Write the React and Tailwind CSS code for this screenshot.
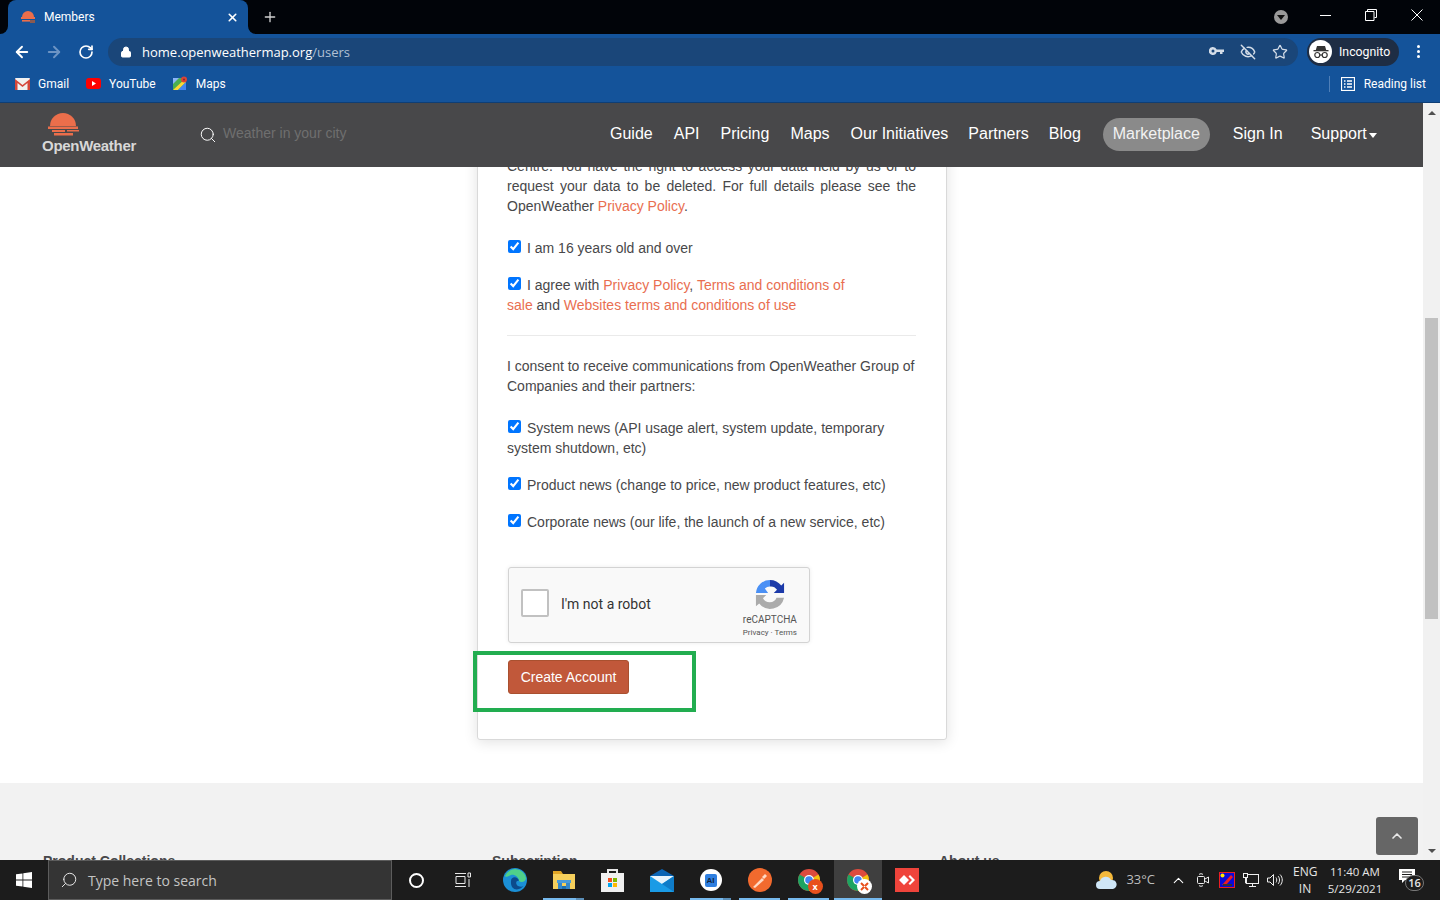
import { ArrowLeft, ArrowRight, RotateCw, Lock, EyeOff, Star, X, Plus, Search, ChevronUp } from 'lucide-react'

const chromeFont = 'font-["Open_Sans",sans-serif]'
const uiFont = 'font-["Roboto",sans-serif]'

function TabFavicon() {
  return (
    <svg width="16" height="16" viewBox="0 0 16 16">
      <path d="M2 8a6 6 0 0 1 12 0z" fill="#eb6e4b" />
      <rect x="1" y="8" width="14" height="2" fill="#eb6e4b" />
      <rect x="2" y="11" width="8" height="1.600" fill="#eb6e4b" />
      <rect x="10" y="11" width="5" height="3" fill="#8a5a50" />
    </svg>
  )
}

function GmailIcon() {
  return (
    <svg width="15" height="12" viewBox="0 0 15 12">
      <rect width="15" height="12" rx="1" fill="#f1f1f1" />
      <path d="M0 1 7.500 7 15 1v11h-2.500V5L7.500 9 2.500 5v7H0z" fill="#d5463a" />
    </svg>
  )
}

function YoutubeIcon() {
  return (
    <svg width="15" height="11" viewBox="0 0 15 11">
      <rect width="15" height="11" rx="3" fill="#f00" />
      <path d="M6 3v5l4-2.500z" fill="#fff" />
    </svg>
  )
}

function MapsIcon() {
  return (
    <svg width="15" height="15" viewBox="0 0 15 15">
      <rect y="2" width="13" height="12" fill="#4caf50" />
      <path d="M0 14 13 2v4L5 14z" fill="#fdd835" />
      <path d="M5 14 13 6v8z" fill="#4285f4" />
      <path d="M0 2h6L0 8z" fill="#8ab4f8" />
      <circle cx="11" cy="3.500" r="3" fill="#db4437" />
      <circle cx="11" cy="3.500" r="1" fill="#8e2a20" />
    </svg>
  )
}

function KeyIcon() {
  return (
    <svg width="15" height="9" viewBox="0 0 15 9" fill="#d4dde8">
      <path d="M4 0a4 4 0 0 1 3.700 2.500H15v2.500h-1.500v2H11V5H7.700A4 4 0 1 1 4 0zm0 2.500a1.500 1.500 0 1 0 0 3 1.500 1.500 0 0 0 0-3z" fillRule="evenodd" />
    </svg>
  )
}

function IncognitoIcon() {
  return (
    <svg width="16" height="14" viewBox="0 0 16 14" fill="none">
      <path d="M4 1h8l1.200 4H2.800z" fill="#333" />
      <rect x="0.500" y="5" width="15" height="1.300" fill="#333" />
      <circle cx="4.300" cy="10" r="2.500" stroke="#333" strokeWidth="1.200" />
      <circle cx="11.700" cy="10" r="2.500" stroke="#333" strokeWidth="1.200" />
      <path d="M6.800 10h2.400" stroke="#333" strokeWidth="1.200" />
    </svg>
  )
}

function ReadingListIcon() {
  return (
    <svg width="14" height="14" viewBox="0 0 14 14" fill="none" stroke="#fff">
      <rect x="0.500" y="0.500" width="13" height="13" strokeWidth="1.200" />
      <path d="M3 4h1.500M3 7h1.500M3 10h1.500M6 4h5M6 7h5M6 10h5" strokeWidth="1.400" />
    </svg>
  )
}

function Logo() {
  return (
    <div className="flex flex-col items-center w-[94px] -mt-[2px]">
      <svg width="38" height="25" viewBox="0 0 38 25" fill="#eb6e4b" className="-translate-x-[26px]">
        <path d="M6 14a13 13 0 0 1 26 0z" />
        <rect x="4" y="14.500" width="30" height="2.500" />
        <rect x="8" y="18" width="13" height="2" />
        <rect x="23" y="18" width="12" height="1.500" />
        <rect x="10" y="21" width="19" height="2.500" />
      </svg>
      <span className='mt-[1px] text-[15px] leading-[16px] font-bold text-[#d8d8d8] tracking-[-0.3px] font-["Liberation_Sans",sans-serif]'>OpenWeather</span>
    </div>
  )
}

function Recaptcha() {
  return (
    <svg width="30" height="30" viewBox="0 0 32 32">
      <path d="M16 1A15 15 0 0 1 28 7L31 4V15H20L23.500 11.500A8 8 0 0 0 16 8Z" fill="#1c3aa9" />
      <path d="M1 15A15 15 0 0 1 16 1V8A8 8 0 0 0 10.500 10L14 15Z" fill="#4a90f5" />
      <path d="M1 17H12L8.500 20.500A8 8 0 0 0 23 20H31A15 15 0 0 1 4.500 26L1 29Z" fill="#ababab" />
    </svg>
  )
}

function Check({ children, className = '' }) {
  return (
    <p className={className}>
      <input type="checkbox" defaultChecked className="ml-[1px] mr-[6px] w-[13px] h-[13px] align-baseline" />
      {children}
    </p>
  )
}

function A({ children }) {
  return <a className="text-[#e96e50]">{children}</a>
}

function TopBrowser() {
  return (
    <div className={chromeFont}>
      <div className="h-[34px] bg-[#010409] flex items-end">
        <div className="relative ml-[8px] w-[240px] h-[34px] bg-[#14539a] rounded-t-lg flex items-center pl-[12px] pr-[9px]">
          <div className="absolute -left-[8px] bottom-0 w-[8px] h-[8px] bg-[#14539a]">
            <div className="w-[8px] h-[8px] bg-[#010409] rounded-br-[8px]" />
          </div>
          <div className="absolute -right-[8px] bottom-0 w-[8px] h-[8px] bg-[#14539a]">
            <div className="w-[8px] h-[8px] bg-[#010409] rounded-bl-[8px]" />
          </div>
          <TabFavicon />
          <span className={`ml-[8px] flex-1 text-[12px] text-white ${uiFont}`}>Members</span>
          <X size={13} strokeWidth={3} className="text-white" />
        </div>
        <div className="ml-[14px] h-[34px] flex items-center">
          <Plus size={16} strokeWidth={2} className="text-[#d0d0d0]" />
        </div>
        <div className="ml-auto h-[34px] flex items-center">
          <div className="w-[14px] h-[14px] rounded-full bg-[#9a9a9a] flex items-center justify-center">
            <div className="border-x-[4px] border-x-transparent border-t-[5px] border-t-[#111]" />
          </div>
          <svg width="11" height="12" viewBox="0 0 11 12" stroke="#fff" className="ml-[32px] -mt-[4px]">
            <path d="M0 6.500h11" />
          </svg>
          <svg width="12" height="12" viewBox="0 0 12 12" fill="none" stroke="#fff" className="ml-[34px] -mt-[4px]">
            <path d="M2.500 2.500v-2h9v8h-2M.5 2.500h8.500v9H.5z" />
          </svg>
          <svg width="12" height="12" viewBox="0 0 12 12" fill="none" stroke="#fff" className="ml-[34px] mr-[17px] -mt-[4px]">
            <path d="M.5.5l11 11M11.500.5l-11 11" />
          </svg>
        </div>
      </div>

      <div className="h-[35px] bg-[#14539a] flex items-center">
        <ArrowLeft size={18} strokeWidth={2.500} className="ml-[13px] text-white" />
        <ArrowRight size={18} strokeWidth={2.500} className="ml-[14px] text-[#6d94c4]" />
        <RotateCw size={16} strokeWidth={2.500} className="ml-[15px] text-white" />
        <div className="ml-[14px] w-[1190px] h-[28px] bg-[#1a4679] rounded-full flex items-center pl-[12px] pr-[10px]">
          <Lock size={12} fill="#fff" className="text-white" />
          <span className="ml-[10px] mt-[3px] text-[13px] text-white">home.openweathermap.org<span className="text-[#b0c0d4]">/users</span></span>
          <div className="ml-auto flex items-center gap-[16px]">
            <KeyIcon />
            <EyeOff size={16} strokeWidth={2.200} className="text-[#d4dde8]" />
            <Star size={16} strokeWidth={1.800} className="text-[#d4dde8]" />
          </div>
        </div>
        <div className="ml-[9px] w-[92px] h-[28px] bg-[#1e2d44] rounded-full flex items-center pl-[2px]">
          <div className="w-[23px] h-[23px] rounded-full bg-white flex items-center justify-center">
            <IncognitoIcon />
          </div>
          <span className={`ml-[7px] mt-[1px] text-[12.300px] text-white ${uiFont}`}>Incognito</span>
        </div>
        <div className="ml-[18px] flex flex-col gap-[2px]">
          <div className="w-[3px] h-[3px] rounded-full bg-white" />
          <div className="w-[3px] h-[3px] rounded-full bg-white" />
          <div className="w-[3px] h-[3px] rounded-full bg-white" />
        </div>
      </div>

      <div className={`h-[34px] bg-[#14539a] border-b border-[#0e3e75] flex items-center text-[12px] text-white pb-[4px] ${uiFont}`}>
        <div className="ml-[15px] flex items-center gap-[8px]"><GmailIcon /><span>Gmail</span></div>
        <div className="ml-[17px] flex items-center gap-[8px]"><YoutubeIcon /><span>YouTube</span></div>
        <div className="ml-[17px] flex items-center gap-[8px]"><MapsIcon /><span>Maps</span></div>
        <div className="ml-auto mr-[14px] flex items-center">
          <div className="w-px h-[16px] bg-[#4f7fb8] mr-[11px]" />
          <ReadingListIcon />
          <span className="ml-[9px]">Reading list</span>
        </div>
      </div>
    </div>
  )
}

function Navbar() {
  const links = [
    ['Guide', 'ml-[263px]'],
    ['API', 'ml-[21px]'],
    ['Pricing', 'ml-[21px]'],
    ['Maps', 'ml-[21px]'],
    ['Our Initiatives', 'ml-[21px]'],
    ['Partners', 'ml-[20px]'],
    ['Blog', 'ml-[20px]'],
  ]
  return (
    <nav className="h-[64px] bg-[#48484a] flex items-center text-white text-[16px] shrink-0 pb-[2px]">
      <div className="ml-[42px]"><Logo /></div>
      <Search size={18} strokeWidth={1.300} className="ml-[63px] mt-[2px] text-white" />
      <span className="ml-[6px] -mt-[1px] w-[124px] text-[14px] text-[#6f6f6f] whitespace-nowrap">Weather in your city</span>
      {links.map(([label, cls]) => (
        <a key={label} className={cls}>{label}</a>
      ))}
      <a className="ml-[22px] h-[33px] w-[107px] rounded-full bg-[#8a8a8a] flex items-center justify-center text-[#f2f2f2]">Marketplace</a>
      <a className="ml-[23px]">Sign In</a>
      <a className="ml-[28px] flex items-center">
        Support
        <span className="ml-[2px] mt-[2px] border-x-[4px] border-x-transparent border-t-[5px] border-t-white" />
      </a>
    </nav>
  )
}

function Card() {
  return (
    <div className="relative ml-[477px] -mt-[40px] w-[470px] h-[613px] bg-white border border-[#d9d9d9] rounded-[3px] shadow-[0_2px_14px_rgba(0,0,0,0.12)] pt-[28px] pl-[29px] pr-[30px] text-[14px] leading-[20px] text-[#48484a]">
      <p className="text-justify">
        Centre. You have the right to access your data held by us or to request your data to be deleted. For full details please see the OpenWeather <A>Privacy Policy</A>.
      </p>
      <Check className="mt-[22px]">I am 16 years old and over</Check>
      <Check className="mt-[17px]">
        I agree with <A>Privacy Policy</A>, <A>Terms and conditions of<br />sale</A> and <A>Websites terms and conditions of use</A>
      </Check>
      <hr className="mt-[20px] border-[#eaeaea]" />
      <p className="mt-[20px]">I consent to receive communications from OpenWeather Group of Companies and their partners:</p>
      <Check className="mt-[22px]">System news (API usage alert, system update, temporary system shutdown, etc)</Check>
      <Check className="mt-[17px]">Product news (change to price, new product features, etc)</Check>
      <Check className="mt-[17px]">Corporate news (our life, the launch of a new service, etc)</Check>

      <div className="mt-[35px] ml-[1px] w-[302px] h-[76px] bg-[#f9f9f9] border border-[#d3d3d3] rounded-[3px] shadow-[0_0_4px_rgba(0,0,0,0.08)] flex items-center pl-[12px] pr-[12px]">
        <div className="flex-1 flex items-center pb-[4px]">
          <div className="w-[28px] h-[28px] bg-white border-2 border-[#c1c1c1] rounded-[2px]" />
          <span className={`ml-[12px] mt-[1px] text-[14px] text-[#333] ${uiFont}`}>I'm not a robot</span>
        </div>
        <div className={`self-start mt-[11px] flex flex-col items-center text-[#555] ${uiFont}`}>
          <Recaptcha />
          <span className="mt-[5px] text-[10px] leading-[12px]">reCAPTCHA</span>
          <span className="mt-[2px] text-[8px] leading-[10px]">Privacy · Terms</span>
        </div>
      </div>

      <button className="block mt-[17px] ml-[1px] w-[121px] h-[34px] bg-[#c1583a] border border-[#a9502f] rounded-[3px] text-white text-[14px]">
        Create Account
      </button>

      <div className="absolute left-[-5px] top-[523px] w-[223px] h-[61px] border-4 border-[#22ad50]" />
    </div>
  )
}

function PageFooter() {
  return (
    <footer className='flex-1 bg-[#f2f2f2] relative pl-[43px] pt-[68px] text-[14px] font-bold text-[#48484a] flex'>
      <span className="w-[449px]">Product Collections</span>
      <span className="w-[447px]">Subscription</span>
      <span>About us</span>
      <div className="absolute left-[1376px] top-[34px] w-[42px] h-[38px] bg-[#666] rounded-[3px] flex items-center justify-center">
        <ChevronUp size={16} strokeWidth={2.500} className="text-[#e8e8e8]" />
      </div>
    </footer>
  )
}

function Scrollbar() {
  return (
    <div className="w-[17px] bg-[#f1f1f1] flex flex-col items-center shrink-0">
      <div className="mt-[8px] border-x-[4px] border-x-transparent border-b-[4px] border-b-[#505050]" />
      <div className="mt-[203px] w-[13px] h-[301px] bg-[#c1c1c1]" />
      <div className="mt-auto mb-[7px] border-x-[4px] border-x-transparent border-t-[4px] border-t-[#505050]" />
    </div>
  )
}

function Edge() {
  return (
    <svg width="24" height="24" viewBox="0 0 24 24">
      <circle cx="12" cy="12" r="12" fill="#1b8fd6" />
      <path d="M2 8A11 11 0 0 1 23 10c0 4-5 5-7 3 0-4-5-7-8-6S3 10 2 8z" fill="#4fd08a" />
      <path d="M8 13c0-5 7-5 8 0-3-1-4 3-1 5 3 1 5 1 6-1-3 6-14 7-13-4z" fill="#0c4a8c" />
    </svg>
  )
}

function Explorer() {
  return (
    <svg width="22" height="20" viewBox="0 0 22 20">
      <path d="M0 1h8l2 3H0z" fill="#e0a526" />
      <rect y="4" width="22" height="15" fill="#f5cf5c" />
      <rect x="4" y="10" width="14" height="3" fill="#4a9bd8" />
      <rect x="5" y="13" width="4" height="6" fill="#3587c9" />
      <rect x="13" y="13" width="4" height="6" fill="#3587c9" />
      <rect x="9" y="16" width="4" height="3" fill="#1d6fae" />
    </svg>
  )
}

function Store() {
  return (
    <svg width="23" height="24" viewBox="0 0 23 24">
      <path d="M7 6V2h9v4" fill="none" stroke="#e8e8e8" strokeWidth="2" />
      <rect y="5" width="23" height="19" fill="#f0f0f0" />
      <rect x="7" y="10" width="4" height="4" fill="#f25022" />
      <rect x="12" y="10" width="4" height="4" fill="#7fba00" />
      <rect x="7" y="15" width="4" height="4" fill="#00a4ef" />
      <rect x="12" y="15" width="4" height="4" fill="#ffb900" />
    </svg>
  )
}

function Mail() {
  return (
    <svg width="24" height="23" viewBox="0 0 24 23">
      <path d="M12 0 24 7v2H0V7z" fill="#0a64b4" />
      <rect y="7" width="24" height="16" fill="#1a9be6" />
      <path d="M0 7h24l-12 8z" fill="#e8f4fc" />
      <path d="M12 15 24 23V7z" fill="#0f7cc8" />
    </svg>
  )
}

function AiApp() {
  return (
    <div className='w-[22px] h-[22px] rounded-full bg-white flex items-center justify-center'>
      <div className='w-[12px] h-[13px] bg-[#2f7fe0] rounded-[2px] text-[8px] leading-[13px] font-bold text-[#10233f] text-center font-["Liberation_Sans",sans-serif]'>AI</div>
    </div>
  )
}

function Postman() {
  return (
    <svg width="24" height="24" viewBox="0 0 24 24">
      <circle cx="12" cy="12" r="12" fill="#f26a2e" />
      <path d="M5 19 14 10l2 2-9 8zM14 9l3-3 2 2-3 3z" fill="#ffd9c4" />
    </svg>
  )
}

function ChromeLogo() {
  return (
    <svg width="22" height="22" viewBox="0 0 22 22">
      <circle cx="11" cy="11" r="11" fill="#dd4b3e" />
      <path d="M11 11 20.500 5.500A11 11 0 0 1 11 22z" fill="#f4c20d" />
      <path d="M11 11 11 22A11 11 0 0 1 1.500 5.500z" fill="#1da462" />
      <circle cx="11" cy="11" r="5" fill="#fff" />
      <circle cx="11" cy="11" r="3.800" fill="#4285f4" />
    </svg>
  )
}

function TaskbarApp({ children, active, running, stacked }) {
  return (
    <div className={`relative h-[40px] flex items-center justify-center ${active ? 'w-[48px] ml-[1px] bg-[#3f3f3f]' : 'w-[49px]'}`}>
      {children}
      {running && <div className={`absolute bottom-0 h-[2px] bg-[#76b9ed] ${active ? 'left-0 right-0' : 'left-[4px] right-[4px]'}`} />}
      {stacked && <div className="absolute bottom-0 right-[4px] w-[8px] h-[2px] bg-[#5b8fb8]" />}
    </div>
  )
}

function Tray() {
  return (
    <div className='ml-auto flex items-center h-[40px] text-[#e6e6e6]'>
      <svg width="22" height="20" viewBox="0 0 22 20">
        <circle cx="11" cy="8" r="7" fill="#f5b93a" />
        <path d="M5 19a4 4 0 0 1 0-8 6 6 0 0 1 11-1 4.500 4.500 0 0 1 2 9z" fill="#cfe6f7" />
      </svg>
      <span className="ml-[9px] text-[13px] text-[#bcbcbc]">33°C</span>
      <ChevronUp size={17} strokeWidth={1.500} className="ml-[15px] text-white" />
      <svg width="12" height="16" viewBox="0 0 12 16" fill="none" stroke="#eee" className="ml-[10px]">
        <rect x="0.500" y="4.500" width="7" height="7" rx="1" />
        <path d="M8 7l3.500-2v6L8 9M2 2.500c1-1 3-1 4 0M2 13.500c1 1 3 1 4 0" />
      </svg>
      <svg width="16" height="16" viewBox="0 0 16 16" className="ml-[10px]">
        <rect width="16" height="16" fill="#ed1c24" />
        <rect x="1" y="1" width="14" height="14" fill="#0a0ad8" />
        <circle cx="3.500" cy="3.500" r="2" fill="#ffe600" />
        <path d="M3 13 12 3l2 2-7 8z" fill="#ed1c24" />
        <rect x="4" y="12" width="9" height="2" fill="#333" />
      </svg>
      <svg width="16" height="14" viewBox="0 0 16 14" fill="none" stroke="#eee" className="ml-[8px]">
        <rect x="3.500" y="1.500" width="12" height="9" />
        <rect x="0.500" y="0.500" width="4" height="4" fill="#1c1c1c" />
        <path d="M9.500 10.500v3M6 13.500h7M2.500 5v5h1" />
      </svg>
      <svg width="16" height="14" viewBox="0 0 16 14" fill="none" stroke="#eee" className="ml-[8px]">
        <path d="M.5 5h2.500l3.500-3.500v11L3 9H.5zM9 4.500c1 1.500 1 3.500 0 5M11 3c2 2 2 6 0 8M13 1.500c3 3 3 8 0 11" />
      </svg>
      <div className="ml-[10px] w-[24px] text-center text-[12px] leading-[17px]">
        <div>ENG</div>
        <div>IN</div>
      </div>
      <div className="w-[76px] text-center text-[11.500px] leading-[17px]">
        <div>11:40 AM</div>
        <div>5/29/2021</div>
      </div>
      <div className="relative ml-[6px] mr-[25px] w-[16px] h-[24px]">
        <svg width="16" height="15" viewBox="0 0 16 15" className="absolute top-[1px] left-0">
          <path d="M0 0h16v11H6l-3 3v-3H0z" fill="#fff" />
          <path d="M3 3h10M3 5.500h10M3 8h10" stroke="#1c1c1c" />
        </svg>
        <div className="absolute left-[6px] top-[7px] w-[19px] h-[16px] rounded-full bg-[#1c1c1c] border border-[#777] text-[11px] leading-[14px] text-center font-semibold">16</div>
      </div>
    </div>
  )
}

function Taskbar() {
  return (
    <div className={`h-[40px] bg-[#1c1c1c] flex items-center shrink-0 ${chromeFont}`}>
      <div className="w-[48px] flex justify-center">
        <svg width="16" height="16" viewBox="0 0 16 16" fill="#fff">
          <path d="M0 2.300 6.500 1.400v6.200H0zM7.300 1.300 16 0v7.600H7.300zM0 8.400h6.500v6.200L0 13.700zM7.300 8.400H16V16l-8.700-1.200z" />
        </svg>
      </div>
      <div className="w-[344px] h-[40px] bg-[#343434] border border-[#5c5c5c] flex items-center pl-[11px]">
        <Search size={18} strokeWidth={1.300} className="text-[#e8e8e8] -scale-x-100" />
        <span className="ml-[10px] text-[14px] text-[#c4c4c4]">Type here to search</span>
      </div>
      <div className="w-[48px] flex justify-center">
        <div className="w-[15px] h-[15px] rounded-full border-2 border-white" />
      </div>
      <div className="w-[46px] flex justify-center">
        <svg width="16" height="16" viewBox="0 0 16 16" fill="none" stroke="#e8e8e8">
          <path d="M0 1.500h11M0 14.500h11M1 4.500h9v7H1zM13 1h2.500v4H13zM14 7v8" />
        </svg>
      </div>
      <div className="ml-[4px] flex items-center">
        <TaskbarApp><Edge /></TaskbarApp>
        <TaskbarApp running stacked><Explorer /></TaskbarApp>
        <TaskbarApp><Store /></TaskbarApp>
        <TaskbarApp><Mail /></TaskbarApp>
        <TaskbarApp running stacked><AiApp /></TaskbarApp>
        <TaskbarApp running><Postman /></TaskbarApp>
        <TaskbarApp running>
          <div className="relative">
            <ChromeLogo />
            <div className='absolute -right-[3px] -bottom-[3px] w-[15px] h-[15px] rounded-full bg-[#e8501c] text-white text-[9px] leading-[15px] text-center font-bold'>x</div>
          </div>
        </TaskbarApp>
        <TaskbarApp running active>
          <div className="relative">
            <ChromeLogo />
            <svg width="15" height="15" viewBox="0 0 15 15" className="absolute -right-[3px] -bottom-[3px]">
              <circle cx="7.500" cy="7.500" r="7.500" fill="#fff" />
              <path d="M4 4l3 3M11 4 8 7M4 11l3-3M11 11 8 8" stroke="#e8501c" strokeWidth="2" />
            </svg>
          </div>
        </TaskbarApp>
        <TaskbarApp>
          <div className="w-[24px] h-[24px] bg-[#ef443b] flex items-center justify-center">
            <svg width="16" height="10" viewBox="0 0 16 10" fill="#fff">
              <path d="M5 0l5 5-5 5-5-5zM11 0l5 5-5 5-1.500-1.500L13 5 9.500 1.500z" />
            </svg>
          </div>
        </TaskbarApp>
      </div>
      <Tray />
    </div>
  )
}

export default function App() {
  return (
    <div className='w-[1440px] h-[900px] flex flex-col overflow-hidden font-["Liberation_Sans",Arial,sans-serif]'>
      <TopBrowser />
      <div className="flex-1 flex min-h-0">
        <div className="flex-1 flex flex-col min-w-0">
          <Navbar />
          <div className="relative flex-1 flex flex-col min-h-0 overflow-hidden">
            <main className="h-[616px] bg-white overflow-hidden shrink-0">
              <Card />
            </main>
            <PageFooter />
          </div>
        </div>
        <Scrollbar />
      </div>
      <Taskbar />
    </div>
  )
}
